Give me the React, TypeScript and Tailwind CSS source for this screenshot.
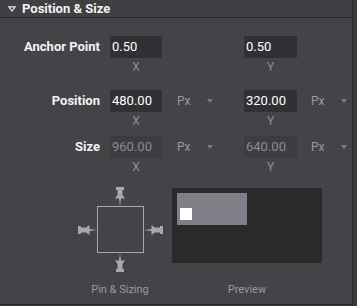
import React from 'react';

const font = { fontFamily: 'Roboto, "Noto Sans", sans-serif' };

const PIN = 'M1 0 H9 V3 H7.5 V8 L10 11.5 H6 L5 19 L4 11.5 H0 L2.5 8 V3 H1 Z';

// direction is where the needle points
function Pin({ dir }: { dir: 'down' | 'up' | 'left' | 'right' }) {
  const vertical = dir === 'down' || dir === 'up';
  const m = {
    down: 'matrix(1 0 0 1 0 0)',
    up: 'matrix(1 0 0 -1 0 19)',
    right: 'matrix(0 1 1 0 0 0)',
    left: 'matrix(0 1 -1 0 19 0)',
  }[dir];
  return (
    <svg
      width={vertical ? 10 : 19}
      height={vertical ? 19 : 10}
      viewBox={vertical ? '0 0 10 19' : '0 0 19 10'}
      className="block shrink-0"
    >
      <g transform={m}>
        <path d={PIN} fill="#a8a7b0" />
      </g>
    </svg>
  );
}

function Caret() {
  return (
    <svg width="6" height="4" viewBox="0 0 6 4" className="block">
      <polygon points="0,0 6,0 3,4" fill="#7a7982" />
    </svg>
  );
}

function Field({ value, dim, w = 'w-[52px]' }: { value: string; dim?: boolean; w?: string }) {
  return (
    <div
      className={`${w} h-[22px] flex items-center pl-[2px] text-[13px] ${
        dim ? 'bg-[#3d3c41] text-[#8d8c95]' : 'bg-[#313034] text-white'
      }`}
    >
      {value}
    </div>
  );
}

function Unit() {
  return (
    <div className="flex items-center h-[22px]">
      <span className="text-[12px] text-[#9a99a2]">Px</span>
      <span className="ml-[16px]">
        <Caret />
      </span>
    </div>
  );
}

function Row({
  label,
  x,
  y,
  units,
  dim,
}: {
  label: string;
  x: string;
  y: string;
  units?: boolean;
  dim?: boolean;
}) {
  return (
    <div className="flex flex-col">
      <div className="flex items-center">
        <div className="w-[100px] text-right text-[13px] font-bold text-[#f2f2f2]">{label}</div>
        <div className="ml-[10px]">
          <Field value={x} dim={dim} />
        </div>
        <div className="w-[82px] pl-[15px]">{units && <Unit />}</div>
        <Field value={y} dim={dim} w="w-[53px]" />
        <div className="pl-[14px]">{units && <Unit />}</div>
      </div>
      <div className="flex text-[12px] text-[#8f8e97] leading-[14px] mt-[2px]">
        <div className="w-[110px]" />
        <div className="w-[52px] text-center">X</div>
        <div className="w-[82px]" />
        <div className="w-[53px] text-center">Y</div>
      </div>
    </div>
  );
}

export default function App() {
  return (
    <div className="w-[357px] h-[306px] bg-[#3a393e] overflow-hidden" style={font}>
      <div className="w-[353px] h-[305px] bg-[#444348] border-r border-b border-[#29282c] flex flex-col">
        <div className="h-[18px] shrink-0 bg-[#403f44] border-b border-[#2a292d] flex items-center">
          <svg width="8" height="6" viewBox="0 0 8 6" className="ml-[8px] shrink-0">
            <polygon points="0.8,0.8 7.2,0.8 4,5" fill="none" stroke="#e8e8e8" strokeWidth="1.2" />
          </svg>
          <span className="ml-[6px] text-[13px] font-bold text-[#f2f2f2] leading-[17px]">
            Position &amp; Size
          </span>
        </div>

        <div className="mt-[18px]">
          <Row label="Anchor Point" x="0.50" y="0.50" />
        </div>
        <div className="mt-[16px]">
          <Row label="Position" x="480.00" y="320.00" units />
        </div>
        <div className="mt-[8px]">
          <Row label="Size" x="960.00" y="640.00" units dim />
        </div>

        <div className="flex items-start mt-[13px]">
          <div className="ml-[77px] w-[86px] flex flex-col items-center">
            <Pin dir="down" />
            <div className="flex items-center">
              <Pin dir="right" />
              <div className="w-[47px] h-[47px] border border-[#a9a8b1]" />
              <Pin dir="left" />
            </div>
            <Pin dir="up" />
          </div>
          <div className="ml-[9px] mt-[1px] w-[150px] h-[75px] bg-[#2a2a2a] pt-[5px] pl-[5px]">
            <div className="w-[70px] h-[32px] bg-[#807f88] flex items-end pb-[5px] pl-[3px]">
              <div className="w-[12px] h-[12px] bg-white" />
            </div>
          </div>
        </div>

        <div className="flex text-[11px] text-[#9a99a2] leading-[14px] mt-[11px]">
          <div className="ml-[77px] w-[86px] text-center whitespace-nowrap">Pin &amp; Sizing</div>
          <div className="ml-[9px] w-[150px] text-center">Preview</div>
        </div>
      </div>
    </div>
  );
}
